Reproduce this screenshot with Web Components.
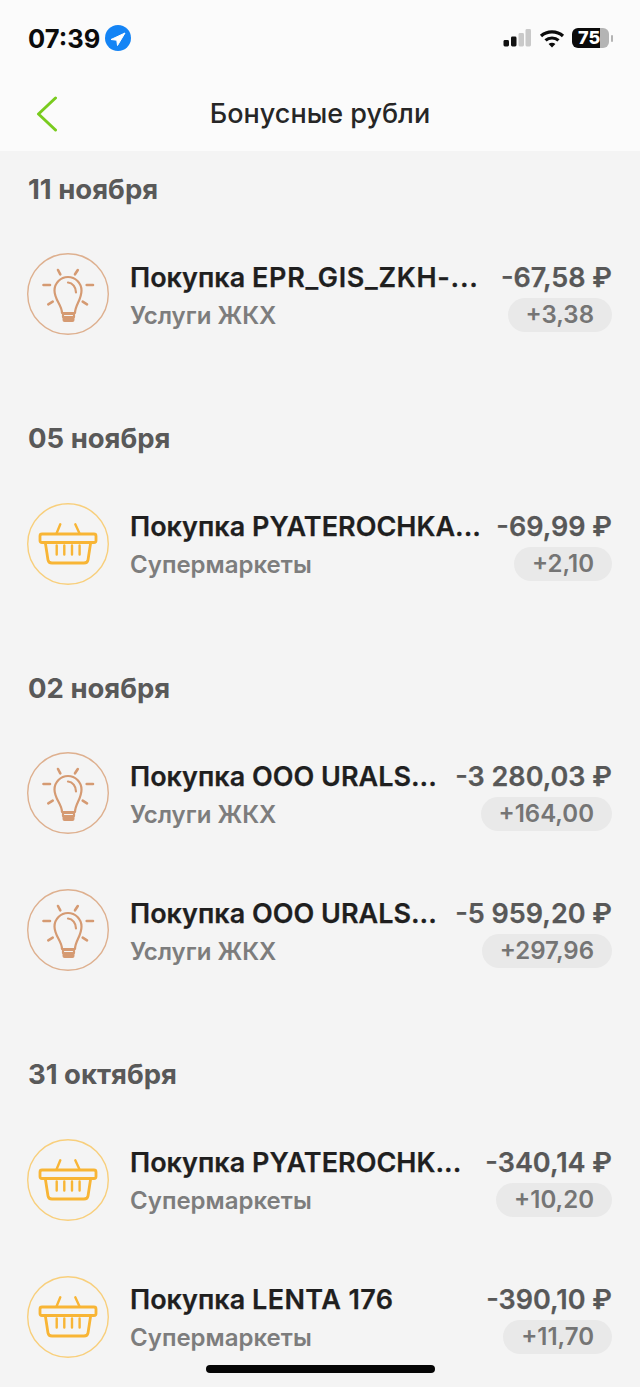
<!DOCTYPE html>
<html lang="ru">
<head>
<meta charset="utf-8">
<title>Бонусные рубли</title>
<style>
    html, body { margin: 0; padding: 0; }
    body { width: 640px; height: 1387px; overflow: hidden; background: #f4f4f4; font-family: Inter, "Liberation Sans", sans-serif; }
</style>
</head>
<body>
<app-screen>
    <status-bar></status-bar>
    <nav-header title="Бонусные рубли"></nav-header>
    <day-group label="11 ноября">
        <bonus-row icon="bulb" title="Покупка" merchant="EPR_GIS_ZKH-..." spread="0.7" category="Услуги ЖКХ" amount="-67,58 ₽" bonus="+3,38"></bonus-row>
    </day-group>
    <day-group label="05 ноября">
        <bonus-row icon="basket" title="Покупка" merchant="PYATEROCHKA..." category="Супермаркеты" amount="-69,99 ₽" bonus="+2,10"></bonus-row>
    </day-group>
    <day-group label="02 ноября">
        <bonus-row icon="bulb" title="Покупка" merchant="ООО URALS..." category="Услуги ЖКХ" amount="-3 280,03 ₽" bonus="+164,00"></bonus-row>
        <bonus-row icon="bulb" title="Покупка" merchant="ООО URALS..." category="Услуги ЖКХ" amount="-5 959,20 ₽" bonus="+297,96"></bonus-row>
    </day-group>
    <day-group label="31 октября">
        <bonus-row icon="basket" title="Покупка" merchant="PYATEROCHK..." category="Супермаркеты" amount="-340,14 ₽" bonus="+10,20"></bonus-row>
        <bonus-row icon="basket" title="Покупка" merchant="LENTA 176" spread="0.4" category="Супермаркеты" amount="-390,10 ₽" bonus="+11,70"></bonus-row>
    </day-group>
    <home-bar></home-bar>
</app-screen>

<script>
// Page wrapper
class AppScreen extends HTMLElement {
    constructor() {
        super();
        this.attachShadow({ mode: 'open' });
        this.shadowRoot.innerHTML = `
            <style>
                :host { display: block; position: relative; width: 640px; height: 1387px; overflow: hidden; background: #f4f4f4; }
            </style>
            <slot></slot>
        `;
    }
}

// Top line with the clock, signal, wifi and battery
class StatusBar extends HTMLElement {
    constructor() {
        super();
        this.attachShadow({ mode: 'open' });
        this.shadowRoot.innerHTML = `
            <style>
                :host { display: flex; align-items: center; justify-content: space-between; height: 76px; box-sizing: border-box; padding: 0 27px 0 28px; background: #fbfbfb; }
                .left, .right { display: flex; align-items: center; }
                .time { font-size: 25.5px; font-weight: 700; color: #0c0c0c; }
                .left svg { margin-left: 5px; }
                .right svg { display: block; }
                .wifi { margin-left: 7px; }
                .battery { position: relative; width: 37px; height: 20px; margin-left: 7px; border-radius: 6px; overflow: hidden;
                    background: linear-gradient(90deg, #0b0b0b 0 75%, #b4b4b4 75% 100%); }
                .battery span { position: absolute; left: 6px; top: 0; font-size: 18px; line-height: 20px; font-weight: 800; color: #fff; }
                .nub { width: 2px; height: 7px; margin-left: 2px; border-radius: 1px; background: #b4b4b4; }
            </style>
            <div class="left">
                <span class="time">07:39</span>
                <svg width="26" height="26" viewBox="0 0 26 26">
                    <circle cx="13" cy="13" r="13" fill="#1484f5"/>
                    <path d="M20 8 L6 14.5 L11.8 15.2 L12.5 20.5 Z" fill="#fff" stroke="#fff" stroke-width="1" stroke-linejoin="round"/>
                </svg>
            </div>
            <div class="right">
                <svg width="29" height="18" viewBox="0 0 28 18">
                    <rect x="0" y="11" width="5.5" height="6.5" rx="1.4" fill="#111"/>
                    <rect x="7.5" y="7.5" width="5.5" height="10" rx="1.4" fill="#111"/>
                    <rect x="15" y="4" width="5.5" height="13.5" rx="1.4" fill="#c9c9c9"/>
                    <rect x="22" y="0" width="5.5" height="17.5" rx="1.4" fill="#c9c9c9"/>
                </svg>
                <svg class="wifi" width="26" height="19" viewBox="0 0 26 19" fill="none" stroke="#0b0b0b" stroke-width="3.2">
                    <path d="M2 7 C8 1.5 18 1.5 24 7"/>
                    <path d="M6.5 11.4 C10 8.2 16 8.2 19.5 11.4"/>
                    <path d="M13 18.5 L9.6 15 C11.5 13.3 14.5 13.3 16.4 15 Z" fill="#0b0b0b" stroke="none"/>
                </svg>
                <div class="battery"><span>75</span></div>
                <div class="nub"></div>
            </div>
        `;
    }
}

// Back chevron and centred title
class NavHeader extends HTMLElement {
    constructor() {
        super();
        this.attachShadow({ mode: 'open' });
    }

    connectedCallback() {
        this.shadowRoot.innerHTML = `
            <style>
                :host { display: grid; grid-template-columns: 1fr auto 1fr; align-items: center; height: 75px; background: #fbfbfb; }
                svg { display: block; margin: 0 0 0 36px; }
                .title { font-size: 27px; font-weight: 500; color: #262626; }
            </style>
            <svg width="22" height="36" viewBox="0 0 22 36" fill="none" stroke="#79cb1e" stroke-width="3" stroke-linecap="round" stroke-linejoin="round">
                <path d="M19.5 2 L2.5 18 L19.5 34"/>
            </svg>
            <div class="title">${this.getAttribute('title')}</div>
            <div></div>
        `;
    }
}

// A dated block of operations
class DayGroup extends HTMLElement {
    constructor() {
        super();
        this.attachShadow({ mode: 'open' });
    }

    connectedCallback() {
        this.shadowRoot.innerHTML = `
            <style>
                :host { display: block; padding: 22.5px 28px 65.5px; }
                .label { height: 30px; margin-bottom: 49.5px; font-size: 27.5px; line-height: 30px; font-weight: 700; color: #595959; }
                .rows { display: flex; flex-direction: column; gap: 55px; }
            </style>
            <div class="label">${this.getAttribute('label')}</div>
            <div class="rows"><slot></slot></div>
        `;
    }
}

const ICONS = {
    bulb: {
        color: '#deb08f',
        svg: `<g fill="none" stroke="#d59a72" stroke-width="2.2" stroke-linecap="round" stroke-linejoin="round">
                <path d="M35 60 C35 52 27.5 47 27.5 37.5 A13.5 13.5 0 0 1 54.5 37.5 C54.5 47 48 52 48 60 Z"/>
                <path d="M41 29.5 C45.5 30 49 34 49 39.5"/>
                <path d="M36 61 H47 V64 H36 Z"/>
                <path d="M35.5 64 H47.5 V67 Q47.5 69 45.5 69 H37.5 Q35.5 69 35.5 67 Z" fill="#d59a72" stroke="none"/>
                <path d="M31 17 L33.3 21.3 M50.8 17 L48 21.3 M16.5 32 H23 M59.7 32 H66 M21.3 51.3 L25.7 48.7 M60 51.3 L55.7 48.7" stroke-width="2.6"/>
              </g>`
    },
    basket: {
        color: '#f8cf7c',
        svg: `<g fill="none" stroke="#f8b535" stroke-width="2.8" stroke-linecap="round" stroke-linejoin="round">
                <path d="M15 31 Q13 31 13 33 V37.5 Q13 39.5 15 39.5 H67 Q69 39.5 69 37.5 V33 Q69 31 67 31 Z"/>
                <path d="M18.3 39.5 L21 57 Q21.5 60 25 60 H57 Q60.5 60 61 57 L63.7 39.5"/>
                <path d="M29.7 30 L33.3 21.3 M52.3 30 L48.3 21.3 M29.7 42.5 V51.5 M37.3 42.5 V51.5 M45 42.5 V51.5 M52.6 42.5 V51.5" stroke-width="2.4"/>
              </g>`
    }
};

// One purchase line: round icon, title, category, amount and bonus chip
class BonusRow extends HTMLElement {
    constructor() {
        super();
        this.attachShadow({ mode: 'open' });
    }

    connectedCallback() {
        this.render();
    }

    render() {
        const icon = ICONS[this.getAttribute('icon')];
        const spread = this.getAttribute('spread') || '0';
        this.shadowRoot.innerHTML = `
            <style>
                :host { display: flex; align-items: center; height: 82px; }
                svg { flex: none; display: block; margin: 0 21px 0 -1px; }
                .main { flex: 1; min-width: 0; display: flex; flex-direction: column; gap: 6px; padding-top: 3px; }
                .side { flex: none; display: flex; flex-direction: column; align-items: flex-end; gap: 3px; padding-top: 4px; }
                .title, .amount { height: 34px; line-height: 34px; font-size: 27px; font-weight: 600; white-space: nowrap; -webkit-text-stroke: 0.25px currentColor; }
                .title { color: #1f1f1f; }
                .merchant { letter-spacing: ${spread}px; }
                .amount { color: #585858; }
                .category { height: 30px; line-height: 30px; font-size: 24px; font-weight: 600; color: #7d7d7d; }
                .bonus { height: 34px; line-height: 34px; padding: 0 18px; border-radius: 17px; background: #e9e9e9; font-size: 24px; font-weight: 600; color: #757575; }
            </style>
            <svg width="82" height="82" viewBox="0 0 82 82">
                <circle cx="41" cy="41" r="40.3" fill="none" stroke="${icon.color}" stroke-width="1.4"/>
                ${icon.svg}
            </svg>
            <div class="main">
                <div class="title">${this.getAttribute('title')} <span class="merchant">${this.getAttribute('merchant')}</span></div>
                <div class="category">${this.getAttribute('category')}</div>
            </div>
            <div class="side">
                <div class="amount">${this.getAttribute('amount')}</div>
                <div class="bonus">${this.getAttribute('bonus')}</div>
            </div>
        `;
    }
}

// Home indicator over the list
class HomeBar extends HTMLElement {
    constructor() {
        super();
        this.attachShadow({ mode: 'open' });
        this.shadowRoot.innerHTML = `
            <style>
                :host { display: block; position: absolute; left: 206px; bottom: 14px; width: 229px; height: 8px; border-radius: 4px; background: #050505; }
            </style>
        `;
    }
}

customElements.define('app-screen', AppScreen);
customElements.define('status-bar', StatusBar);
customElements.define('nav-header', NavHeader);
customElements.define('day-group', DayGroup);
customElements.define('bonus-row', BonusRow);
customElements.define('home-bar', HomeBar);
</script>
</body>
</html>
